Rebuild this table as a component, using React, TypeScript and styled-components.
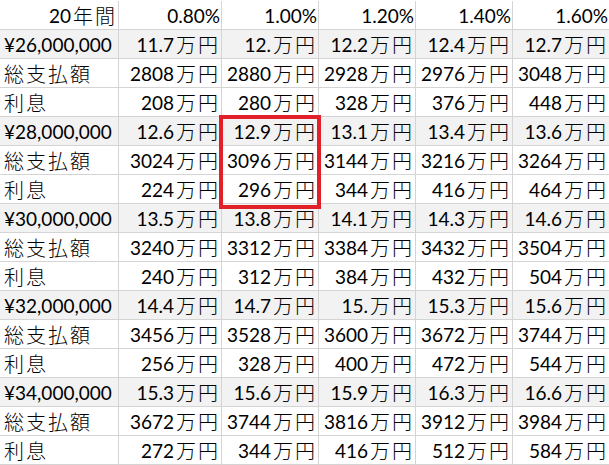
import React from "react";
import styled, { createGlobalStyle } from "styled-components";

const GlobalStyle = createGlobalStyle`
	html, body {
		margin: 0;
		padding: 0;
		background: #ffffff;
		overflow: hidden;
	}
`;

const Sheet = styled.div`
	position: relative;
	display: grid;
	grid-template-columns: 119px 103px repeat(4, 97px);
	grid-auto-rows: 29px;
	width: 610px;
	padding-top: 1px;
	font-family: Lato, "Noto Sans CJK JP", sans-serif;
	color: #000000;
`;

const Cell = styled.div<{ $shade?: boolean; $align?: "left" | "right" }>`
	box-sizing: border-box;
	display: flex;
	align-items: center;
	justify-content: ${(p) => (p.$align === "left" ? "flex-start" : "flex-end")};
	padding: 1px 1px 0 4px;
	border-right: 1px solid #d4d4d4;
	border-bottom: 1px solid #d4d4d4;
	background: ${(p) => (p.$shade ? "#f2f2f2" : "#ffffff")};
	font-size: 19px;
	white-space: nowrap;
	overflow: hidden;
`;

const Kanji = styled.span<{ $spaced?: boolean }>`
	font-family: "Noto Sans CJK JP", sans-serif;
	font-weight: 300;
	font-size: 20px;
	letter-spacing: 2px;
	margin-left: ${(p) => (p.$spaced ? "0" : "2px")};
`;

const Highlight = styled.div`
	position: absolute;
	left: 219px;
	top: 115px;
	width: 102px;
	height: 94px;
	box-sizing: border-box;
	border: 4px solid #e2202a;
	pointer-events: none;
`;

const rates = ["0.80%", "1.00%", "1.20%", "1.40%", "1.60%"];

type Block = {
	amount: string;
	monthly: string[];
	total: string[];
	interest: string[];
};

const blocks: Block[] = [
	{
		amount: "¥26,000,000",
		monthly: ["11.7", "12.", "12.2", "12.4", "12.7"],
		total: ["2808", "2880", "2928", "2976", "3048"],
		interest: ["208", "280", "328", "376", "448"],
	},
	{
		amount: "¥28,000,000",
		monthly: ["12.6", "12.9", "13.1", "13.4", "13.6"],
		total: ["3024", "3096", "3144", "3216", "3264"],
		interest: ["224", "296", "344", "416", "464"],
	},
	{
		amount: "¥30,000,000",
		monthly: ["13.5", "13.8", "14.1", "14.3", "14.6"],
		total: ["3240", "3312", "3384", "3432", "3504"],
		interest: ["240", "312", "384", "432", "504"],
	},
	{
		amount: "¥32,000,000",
		monthly: ["14.4", "14.7", "15.", "15.3", "15.6"],
		total: ["3456", "3528", "3600", "3672", "3744"],
		interest: ["256", "328", "400", "472", "544"],
	},
	{
		amount: "¥34,000,000",
		monthly: ["15.3", "15.6", "15.9", "16.3", "16.6"],
		total: ["3672", "3744", "3816", "3912", "3984"],
		interest: ["272", "344", "416", "512", "584"],
	},
];

const Man = ({ value, shade }: { value: string; shade?: boolean }) => (
	<Cell $shade={shade}>
		{value}
		<Kanji>万円</Kanji>
	</Cell>
);

const App = () => {
	return (
		<>
			<GlobalStyle />
			<Sheet>
				<Cell>
					20<Kanji>年間</Kanji>
				</Cell>
				{rates.map((r) => (
					<Cell key={r}>{r}</Cell>
				))}
				{blocks.map((b) => (
					<React.Fragment key={b.amount}>
						<Cell $shade $align="left">
							{b.amount}
						</Cell>
						{b.monthly.map((v, i) => (
							<Man key={"m" + i} value={v} shade />
						))}
						<Cell $align="left">
							<Kanji $spaced>総支払額</Kanji>
						</Cell>
						{b.total.map((v, i) => (
							<Man key={"t" + i} value={v} />
						))}
						<Cell $align="left">
							<Kanji $spaced>利息</Kanji>
						</Cell>
						{b.interest.map((v, i) => (
							<Man key={"i" + i} value={v} />
						))}
					</React.Fragment>
				))}
				<Highlight />
			</Sheet>
		</>
	);
};

export default App;
